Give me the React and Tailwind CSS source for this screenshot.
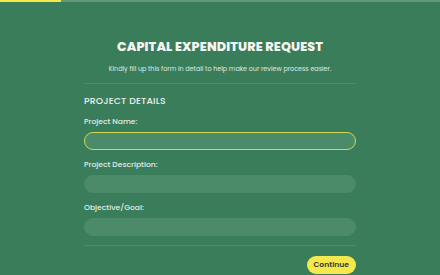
import React from 'react';

const fields = ["Project Name:", "Project Description:", "Objective/Goal:"];

const App = () => {
  return (
    <div className="w-[440px] h-[275px] overflow-hidden bg-[#3a7d5a] font-['Poppins','Lato','Open_Sans',sans-serif] text-white">
      {/* progress */}
      <div className="h-[2px] w-full bg-[#63987d]">
        <div className="h-full w-[61px] bg-[#f7e84a]" />
      </div>

      <div className="w-[272px] mx-auto">
        <h1 className="mt-[36px] text-center text-[12.7px] leading-[18px] font-extrabold tracking-[0.01em] text-[#f4f6f2]">
          CAPITAL EXPENDITURE REQUEST
        </h1>
        <p className="mt-[8px] text-center text-[6.4px] leading-[10px] text-[#dfe9e2]">
          Kindly fill up this form in detail to help make our review process easier.
        </p>
        <div className="mt-[9px] h-px bg-[#4d8b6a]" />

        <h2 className="mt-[10px] text-[9.3px] leading-[14px] font-medium tracking-[0.02em] text-[#eef3ee]">
          PROJECT DETAILS
        </h2>

        {fields.map((label, i) => (
          <div key={label} className={i === 0 ? "mt-[8px]" : "mt-[9px]"}>
            <label className="block text-[7.6px] leading-[11px] font-medium text-[#e3ece6]">{label}</label>
            <div
              className={
                "mt-[5px] h-[18px] rounded-full bg-[#4c8b6a] " +
                (i === 0 ? "border-[1.5px] border-[#cddc4e]" : "border border-[#4c8b6a]")
              }
            />
          </div>
        ))}

        <div className="mt-[9px] h-px bg-[#4d8b6a]" />

        <div className="mt-[10px] flex justify-end">
          <button className="h-[18px] px-[7px] rounded-full bg-[#f5e84c] text-[7.6px] font-semibold text-[#2a3a2c]">
            Continue
          </button>
        </div>
      </div>
    </div>
  );
};

export default App;
